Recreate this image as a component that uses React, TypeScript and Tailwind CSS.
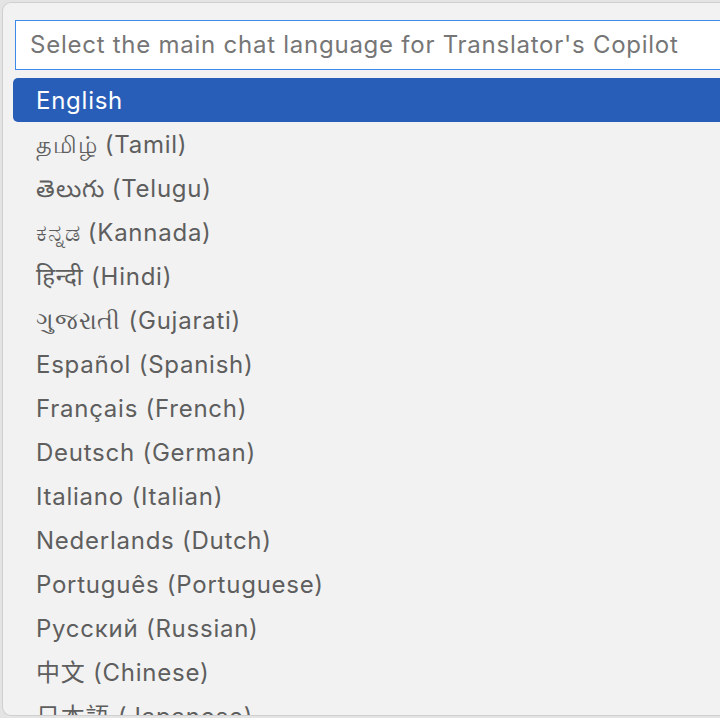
import React from 'react';

const languages = [
  'English',
  'தமிழ் (Tamil)',
  'తెలుగు (Telugu)',
  'ಕನ್ನಡ (Kannada)',
  'हिन्दी (Hindi)',
  'ગુજરાતી (Gujarati)',
  'Español (Spanish)',
  'Français (French)',
  'Deutsch (German)',
  'Italiano (Italian)',
  'Nederlands (Dutch)',
  'Português (Portuguese)',
  'Русский (Russian)',
  '中文 (Chinese)',
  '日本語 (Japanese)',
  '한국어 (Korean)',
];

const App: React.FC = () => {
  return (
    <div
      className="h-[718px] w-[720px] overflow-hidden bg-[#e4e4e4] pl-[2px] pt-[2px]"
      style={{ fontFamily: 'Inter, "Noto Sans", "Noto Sans CJK SC", sans-serif' }}
    >
      <div className="h-[714px] w-[760px] overflow-hidden rounded-l-[9px] border border-r-0 border-[#cfcfcf] bg-[#f2f2f2] pl-[10px] pt-[17px]">
        {/* input */}
        <div className="ml-[2px] flex h-[50px] items-center border border-[#3d8be8] bg-white pl-[14px]">
          <span className="whitespace-nowrap text-[24px] tracking-[0.75px] text-[#767676]">
            Select the main chat language for Translator's Copilot
          </span>
        </div>

        {/* list */}
        <div className="mt-[8px]">
          {languages.map((lang, i) => (
            <div
              key={lang}
              className={
                i === 0
                  ? 'flex h-[44px] items-center rounded-[5px] bg-[#285eb8] pl-[23px] pt-[2px] text-[24px] tracking-[0.75px] text-white'
                  : 'flex h-[44px] items-center pl-[23px] pt-[2px] text-[24px] tracking-[0.75px] text-[#5e5e5e]'
              }
            >
              {lang}
            </div>
          ))}
        </div>
      </div>
    </div>
  );
};

export default App;
